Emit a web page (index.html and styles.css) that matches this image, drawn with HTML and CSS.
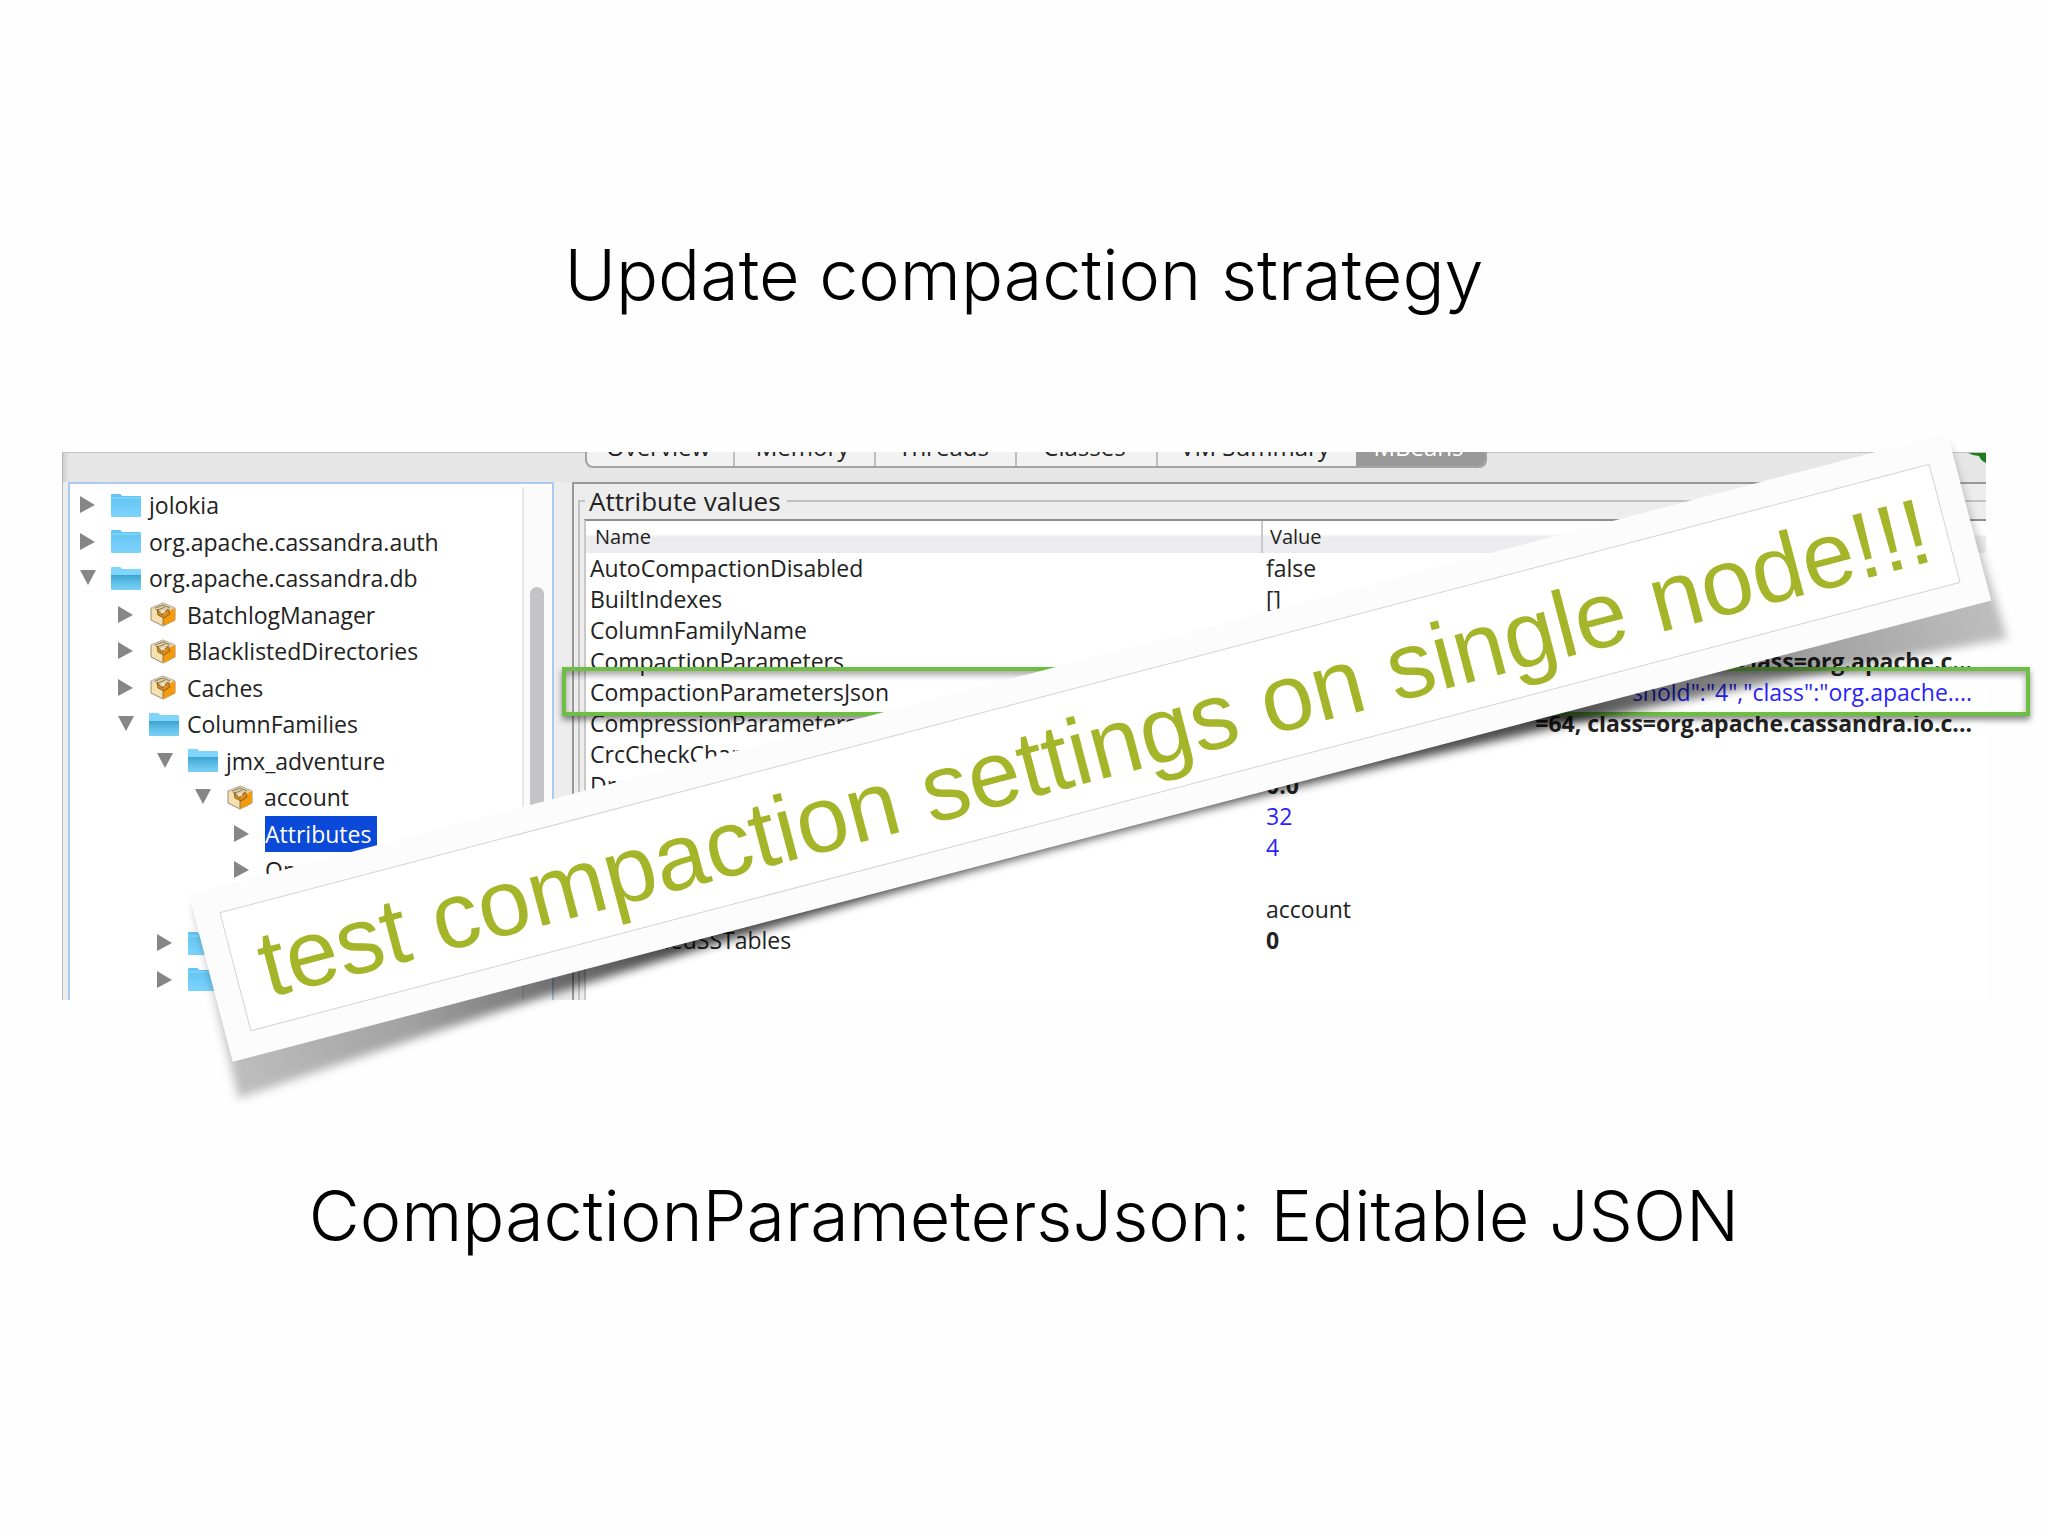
FILE: index.html
```
<!DOCTYPE html>
<html lang="en">
<head>
<meta charset="utf-8">
<title>Update compaction strategy</title>
<link rel="stylesheet" href="styles.css">
</head>
<body>
<svg class="defs" aria-hidden="true">
  <defs>
    <linearGradient id="folderFill" x1="0" y1="0" x2="0" y2="1"><stop offset="0" stop-color="#62c3f2"/><stop offset="1" stop-color="#7bd3fb"/></linearGradient>
    <linearGradient id="openFill" x1="0" y1="0" x2="0" y2="1"><stop offset="0" stop-color="#3fa3cf"/><stop offset="0.5" stop-color="#5fbfe8"/><stop offset="1" stop-color="#7ad0f5"/></linearGradient>
    <symbol id="folder" viewBox="0 0 30 25"><path d="M0 2Q0 1 1 1H9Q10 1 11 3H29Q30 3 30 4V23Q30 24 29 24H1Q0 24 0 23Z" fill="url(#folderFill)"/><path d="M0 5H30" stroke="#8cdcff" stroke-width="1"/></symbol>
    <symbol id="folder-open" viewBox="0 0 30 25"><path d="M0 2Q0 1 1 1H9Q10 1 11 3H29Q30 3 30 4V23Q30 24 29 24H1Q0 24 0 23Z" fill="#7fd6fa"/><path d="M0 9H30V23Q30 24 29 24H1Q0 24 0 23Z" fill="url(#openFill)"/></symbol>
    <symbol id="bean" viewBox="0 0 30 25"><path d="M2 6L14 1L26 6V18L14 24L2 18Z" fill="#f6dfb0" stroke="#9a8a6c" stroke-width="1"/><path d="M14 11L26 6V18L14 24Z" fill="#f59a0c"/><path d="M2 6L14 1L26 6L14 11Z" fill="#dccfae"/><path d="M6 6L14 3L21 6M9 8L16 5M14 11V23" stroke="#8d7a55" stroke-width="1" fill="none"/><path d="M8 7L13 13L19 7L21 12L15 16L9 13Z" fill="#d98c1c" stroke="#8a6424" stroke-width="1"/><path d="M12 9L15 8L16 12Z" fill="#ffe9b8"/></symbol>
    <symbol id="closed" viewBox="0 0 16 18"><path d="M0 0L15 9L0 17Z" fill="#868686"/></symbol>
    <symbol id="opened" viewBox="0 0 16 18"><path d="M0 1H16L8 16Z" fill="#868686"/></symbol>
  </defs>
</svg>
<main class="slide">
  <h1 class="headline">Update compaction strategy</h1>

  <section class="capture">
    <div class="window">
      <div class="toolbar">
        <nav class="tabs">
          <button class="tab first">Overview</button>
          <button class="tab">Memory</button>
          <button class="tab">Threads</button>
          <button class="tab">Classes</button>
          <button class="tab wide">VM Summary</button>
          <button class="tab active">MBeans</button>
        </nav>
        <svg class="status" viewBox="0 0 18 10"><path d="M0 0H18V10Q13 8 11 3Q6 3 0 0Z" fill="#1d7d1d"/></svg>
      </div>
      <div class="panes">
        <div class="tree">
          <ul class="nodes">
            <li><svg class="arrow"><use href="#closed"/></svg><svg class="icon"><use href="#folder"/></svg>jolokia</li>
            <li><svg class="arrow"><use href="#closed"/></svg><svg class="icon"><use href="#folder"/></svg>org.apache.cassandra.auth</li>
            <li><svg class="arrow"><use href="#opened"/></svg><svg class="icon"><use href="#folder-open"/></svg>org.apache.cassandra.db</li>
            <li class="l1"><svg class="arrow"><use href="#closed"/></svg><svg class="icon"><use href="#bean"/></svg>BatchlogManager</li>
            <li class="l1"><svg class="arrow"><use href="#closed"/></svg><svg class="icon"><use href="#bean"/></svg>BlacklistedDirectories</li>
            <li class="l1"><svg class="arrow"><use href="#closed"/></svg><svg class="icon"><use href="#bean"/></svg>Caches</li>
            <li class="l1"><svg class="arrow"><use href="#opened"/></svg><svg class="icon"><use href="#folder-open"/></svg>ColumnFamilies</li>
            <li class="l2"><svg class="arrow"><use href="#opened"/></svg><svg class="icon"><use href="#folder-open"/></svg>jmx_adventure</li>
            <li class="l3"><svg class="arrow"><use href="#opened"/></svg><svg class="icon"><use href="#bean"/></svg>account</li>
            <li class="l4"><svg class="arrow"><use href="#closed"/></svg><span class="selected">Attributes</span></li>
            <li class="l4"><svg class="arrow"><use href="#closed"/></svg><span class="leaf">Operations</span></li>
            <li></li>
            <li class="l2"><svg class="arrow"><use href="#closed"/></svg><svg class="icon"><use href="#folder"/></svg></li>
            <li class="l2"><svg class="arrow"><use href="#closed"/></svg><svg class="icon"><use href="#folder"/></svg></li>
          </ul>
          <div class="track"><div class="thumb"></div></div>
        </div>
        <div class="detail">
          <fieldset class="group">
            <legend>Attribute values</legend>
            <div class="grid">
              <table>
                <thead><tr><th class="name">Name</th><th>Value</th></tr></thead>
                <tbody>
                  <tr><td>AutoCompactionDisabled</td><td>false</td></tr>
                  <tr><td>BuiltIndexes</td><td>[]</td></tr>
                  <tr><td>ColumnFamilyName</td><td></td></tr>
                  <tr><td>CompactionParameters</td><td class="tail strong">class=org.apache.c...</td></tr>
                  <tr><td>CompactionParametersJson</td><td class="tail edit">shold":"4","class":"org.apache....</td></tr>
                  <tr><td>CompressionParameters</td><td class="tail strong">=64, class=org.apache.cassandra.io.c...</td></tr>
                  <tr><td>CrcCheckChance</td><td></td></tr>
                  <tr><td>DroppableTombstoneRatio</td><td class="strong">0.0</td></tr>
                  <tr><td></td><td class="edit">32</td></tr>
                  <tr><td></td><td class="edit">4</td></tr>
                  <tr><td></td><td></td></tr>
                  <tr><td></td><td>account</td></tr>
                  <tr><td>UnleveledSSTables</td><td class="strong">0</td></tr>
                </tbody>
              </table>
            </div>
          </fieldset>
        </div>
      </div>
    </div>
    <div class="marker"></div>
    <div class="banner">
      <svg class="curl" viewBox="-40 -20 1900 280" preserveAspectRatio="none" aria-hidden="true">
        <defs>
          <filter id="soft" x="-5%" y="-20%" width="110%" height="140%"><feGaussianBlur stdDeviation="5"/></filter>
          <linearGradient id="shade" x1="0" x2="1" y1="0" y2="0"><stop offset="0" stop-color="#000" stop-opacity="0.25"/><stop offset="0.1" stop-color="#000" stop-opacity="0.36"/><stop offset="0.25" stop-color="#000" stop-opacity="0.7"/><stop offset="0.75" stop-color="#000" stop-opacity="0.7"/><stop offset="0.9" stop-color="#000" stop-opacity="0.36"/><stop offset="1" stop-color="#000" stop-opacity="0.25"/></linearGradient>
        </defs>
        <path d="M2 12L-4 210Q909 138 1826 214L1818 12Z" fill="url(#shade)" filter="url(#soft)"/>
      </svg>
      <div class="paper"><p class="note">test compaction settings on single node!!!</p></div>
    </div>
  </section>

  <p class="headline caption">CompactionParametersJson: Editable JSON</p>
</main>
</body>
</html>
```
FILE: styles.css
```
* { box-sizing: border-box; }
body { margin: 0; background: #fefefe; color: #000; font-family: "Open Sans", sans-serif; }
.defs { position: absolute; width: 0; height: 0; }
.slide { min-height: 100vh; padding: 231px 62px 0; overflow: hidden; }
.headline { margin: 0; font-family: Inter, sans-serif; font-weight: 300; font-size: 70px; line-height: 88px; text-align: center; }
.capture { position: relative; margin: 133px 0 172px; }

.window { overflow: hidden; border-left: 1px solid #b9b9b9; background: linear-gradient(90deg, #cfcfcf, #e6e6e6 6px); }
.toolbar { display: flex; justify-content: space-between; align-items: flex-start; height: 30px; padding-left: 522px; border-top: 1px solid #c4c4c4; }
.tabs { display: flex; height: 36px; margin-top: -21px; border: 2px solid #a3a3a3; border-radius: 8px; background: #f2f2f2; overflow: hidden; }
.tab { display: flex; justify-content: center; width: 141px; padding: 0 4px 0 0; border: 0; border-right: 2px solid #bdbdbd; background: none; color: #222; font: 500 24px/26px "Open Sans", sans-serif; }
.tab.first { width: 148px; }
.tab.wide { width: 198px; border-right: 0; }
.tab.active { width: 129px; border-right: 0; background: #999; color: #fff; }
.status { width: 18px; height: 10px; }

.panes { display: flex; gap: 18px; padding-left: 5px; background: #ededed; }
.tree { display: flex; flex: 0 0 486px; padding-top: 3px; border: 2px solid #aacbee; border-bottom: 0; background: #fff; }
.nodes { flex: 1; margin: 0; padding: 0 0 2px; list-style: none; font-size: 23px; font-weight: 500; color: #222; }
.nodes li { display: flex; align-items: center; height: 37px; padding-left: 10px; }
.nodes li:nth-child(odd) { height: 36px; }
.nodes .l1 { padding-left: 48px; }
.nodes .l2 { padding-left: 87px; }
.nodes .l3 { padding-left: 125px; }
.nodes .l4 { padding-left: 164px; }
.arrow { flex: none; width: 16px; height: 18px; margin-right: 15px; }
.icon { flex: none; width: 30px; height: 25px; margin-right: 8px; }
.selected, .leaf { padding: 0 6px 0 0; line-height: 36px; }
.selected { background: #0b49d8; color: #fff; }
.track { width: 30px; padding: 100px 8px 0 6px; border-left: 2px solid #e8e8e8; background: #fafafa; }
.thumb { height: 240px; border-radius: 8px; background: #c4c3c5; }

.detail { flex: 1; min-width: 0; padding: 3px 0 0 4px; border: solid #999; border-width: 2px 0 0 2px; }
.group { height: 100%; min-width: 0; margin: 0; padding: 0 0 0 4px; border: solid #c2c2c2; border-width: 2px 0 0 2px; }
.group legend { margin-left: 1px; padding: 0 6px 0 4px; font-size: 26px; line-height: 28px; font-weight: 500; color: #222; }
.grid { height: 100%; margin-top: 4px; border-left: 2px solid #c8c8c8; border-top: 2px solid #8e8e8e; background: #fff; }
table { width: 100%; border-collapse: collapse; table-layout: fixed; font-size: 23px; font-weight: 500; color: #222; white-space: nowrap; }
th { height: 32px; padding: 0 0 0 7px; font-size: 20px; font-weight: 500; line-height: 32px; text-align: left; background: linear-gradient(#fff 40%, #ececee 50%); }
th.name { width: 676px; padding-left: 9px; border-right: 2px solid #c9c9c9; }
td { height: 31px; padding: 0 0 0 4px; line-height: 31px; }
.tail { padding-right: 14px; text-align: right; }
.strong { font-weight: 700; }
.edit { color: #2a1fff; }

.marker { position: absolute; top: 215px; left: 500px; right: -44px; height: 49px; border: 4px solid #6fbe44; box-shadow: 0 4px 6px rgba(0,0,0,.45), inset 0 4px 6px rgba(0,0,0,.35); }

.banner { position: absolute; top: 209px; left: 119px; right: -13px; height: 173px; transform: rotate(-14.7deg); }
.curl { position: absolute; top: -20px; left: -40px; width: calc(100% + 80px); height: 280px; }
.paper { position: relative; height: 100%; padding: 25px; background: #fcfcfd; }
.note { height: 100%; margin: 0; padding-left: 8px; border: 1px solid #d3d3d8; background: #fff; color: #a4b52a; font: 94px/124px "Liberation Sans", Arial, sans-serif; text-align: center; white-space: nowrap; }
```
